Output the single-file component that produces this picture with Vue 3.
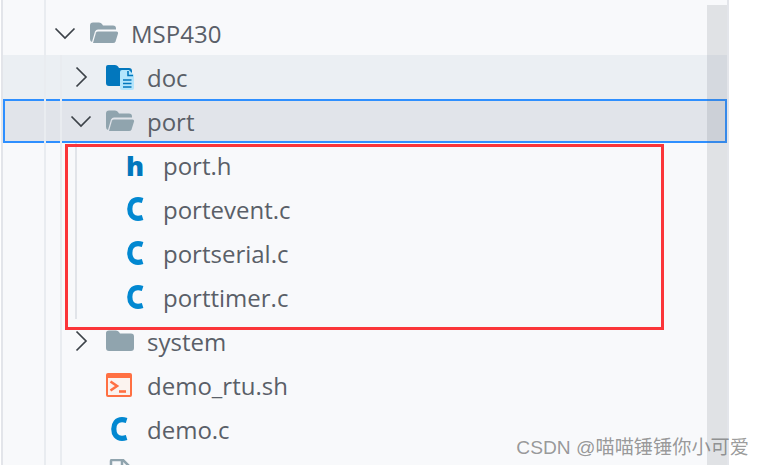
<script setup>
const rows = [
  { name: 'MSP430', depth: 0, arrow: 'down', icon: 'open' },
  { name: 'doc', depth: 1, arrow: 'right', icon: 'doc', cls: 'hover' },
  { name: 'port', depth: 1, arrow: 'down', icon: 'open', cls: 'selected' },
  { name: 'port.h', depth: 2, icon: 'h' },
  { name: 'portevent.c', depth: 2, icon: 'c' },
  { name: 'portserial.c', depth: 2, icon: 'c' },
  { name: 'porttimer.c', depth: 2, icon: 'c' },
  { name: 'system', depth: 1, arrow: 'right', icon: 'folder' },
  { name: 'demo_rtu.sh', depth: 1, icon: 'sh' },
  { name: 'demo.c', depth: 1, icon: 'c' },
  { name: '', depth: 1, icon: 'file' },
]
</script>

<template>
  <div class="page">
    <div class="panel">
      <div v-for="(row, i) in rows" :key="i" class="row" :class="[row.cls, 'depth' + row.depth]">
        <span class="twisty">
          <svg v-if="row.arrow === 'down'" width="24" height="24" viewBox="0 0 24 24"><path d="M2.500 7.500 12 17l9.500-9.500" fill="none" stroke="#3c4248" stroke-width="1.700"/></svg>
          <svg v-else-if="row.arrow === 'right'" width="24" height="24" viewBox="0 0 24 24"><path d="M7.500 2.500 17 12l-9.500 9.500" fill="none" stroke="#3c4248" stroke-width="1.700"/></svg>
        </span>
        <span class="icon">
          <svg v-if="row.icon === 'open'" width="30" height="24" viewBox="0 0 30 24">
            <path d="M1 4.500q0-3 3-3h6q2 0 3 1.500l1 1.500h10q3 0 3 3v1H9q-2 0-3 2l-3 10.500q-2-.5-2-3z" fill="#90a4ae"/>
            <path d="M7 11.500q.5-1 2-1h18.500q2 0 1.500 2l-2.500 8q-.5 1.500-2.500 1.500H4z" fill="#90a4ae"/>
          </svg>
          <svg v-else-if="row.icon === 'folder'" width="30" height="24" viewBox="0 0 30 24">
            <path d="M4 1.500h7q2 0 3 1.500l1 1.500h11q3 0 3 3v11.500q0 3-3 3H4q-3 0-3-3V4q0-2.500 3-2.500z" fill="#90a4ae"/>
          </svg>
          <svg v-else-if="row.icon === 'doc'" width="30" height="26" viewBox="0 0 30 26">
            <path d="M3 1h7q2 0 3 1.500L14 4h10q3 0 3 3v15H4q-3 0-3-3V3q0-2 2-2z" fill="#0277bd"/>
            <path d="M17 6h7l5 5v13q0 2-2 2H17q-2 0-2-2V8q0-2 2-2z" fill="#b3e5fc"/>
            <path d="M23 7v4.500h5M18 16h8.500M18 19.500h8.500M18 23h8.500" fill="none" stroke="#0277bd" stroke-width="1.600"/>
          </svg>
          <svg v-else-if="row.icon === 'sh'" width="30" height="24" viewBox="0 0 30 24">
            <rect x="1" y="0" width="26" height="24" rx="2" fill="#ff7043"/>
            <rect x="3" y="5" width="22" height="17" fill="#fbf3ef"/>
            <path d="M5.500 8.500l6.500 4.500-6.500 4.500" fill="none" stroke="#ff7043" stroke-width="2.600"/>
            <path d="M14 18.500h7" stroke="#ff7043" stroke-width="2.600"/>
          </svg>
          <svg v-else-if="row.icon === 'c'" width="30" height="28" viewBox="0 0 30 28">
            <path d="M21.600 5.500Q19 4.700 17 4.700C11.500 4.700 8.800 8.800 8.800 14S11.500 23.300 17 23.300Q19 23.300 21.600 22.500" fill="none" stroke="#0288d1" stroke-width="5.200"/>
          </svg>
          <svg v-else-if="row.icon === 'file'" width="30" height="28" viewBox="0 0 30 28">
            <path d="M6 2q0-1 1-1h11l7 7v19H6z" fill="none" stroke="#90a4ae" stroke-width="2.500"/>
            <path d="M17 1v8h8" fill="none" stroke="#90a4ae" stroke-width="2.500"/>
          </svg>
          <span v-else class="h">h</span>
        </span>
        <span v-if="row.name" class="name">{{ row.name }}</span>
      </div>
      <div class="guide g1"></div>
      <div class="guide g2"></div>
      <div class="guide g3"></div>
      <div class="scrollbar"></div>
      <div class="redbox"></div>
    </div>
    <div class="mark">CSDN @喵喵锤锤你小可爱</div>
  </div>
</template>

<style>
html, body { margin: 0; background: #fff; overflow: hidden; }
</style>

<style scoped>
.page {
  position: relative;
  width: 764px;
  height: 465px;
  overflow: hidden;
  font-family: "Open Sans", "Noto Sans", "Noto Sans CJK SC", sans-serif;
}
.panel {
  position: relative;
  width: 728px;
  height: 465px;
  margin-left: 1px;
  box-sizing: border-box;
  padding-top: 11px;
  background: #f8f9fb;
  border-left: 2px solid #e3e5ea;
  border-right: 2px solid #e3e5ea;
  overflow: hidden;
}
.row {
  display: flex;
  align-items: center;
  height: 44px;
  box-sizing: border-box;
}
.hover { background: #ebeff3; }
.selected {
  background: #e1e4ea;
  border: 2px solid #2e8fff;
}
.depth0 { padding-left: 50px; }
.depth1 { padding-left: 66px; }
.selected.depth1 { padding-left: 64px; }
.depth2 { padding-left: 82px; }
.twisty {
  display: flex;
  width: 24px;
  height: 24px;
  margin-right: 12px;
}
.icon {
  display: flex;
  justify-content: center;
  align-items: center;
  width: 30px;
  margin-right: 12px;
}
.h {
  font-weight: 800;
  font-size: 27px;
  color: #0277bd;
  line-height: 1;
  margin-right: 2px;
}
.name {
  font-size: 24px;
  color: #5a5f68;
}
.guide {
  position: absolute;
  width: 2px;
  background: #e9ecf0;
}
.g1 { left: 41px; top: 0; bottom: 0; }
.g2 { left: 57px; top: 55px; bottom: 0; }
.g3 { left: 72px; top: 143px; height: 176px; background: #e1e4e9; }
.scrollbar {
  position: absolute;
  left: 704px;
  top: 5px;
  right: 0;
  bottom: 0;
  background: rgba(100, 106, 120, 0.16);
}
.redbox {
  position: absolute;
  left: 62px;
  top: 144px;
  width: 599px;
  height: 186px;
  box-sizing: border-box;
  border: 3px solid #fb3539;
}
.mark {
  position: absolute;
  right: 15px;
  top: 432px;
  font-family: "Liberation Sans", "Noto Sans CJK SC", sans-serif;
  font-size: 19.2px;
  color: rgba(90, 90, 90, 0.62);
}
</style>
